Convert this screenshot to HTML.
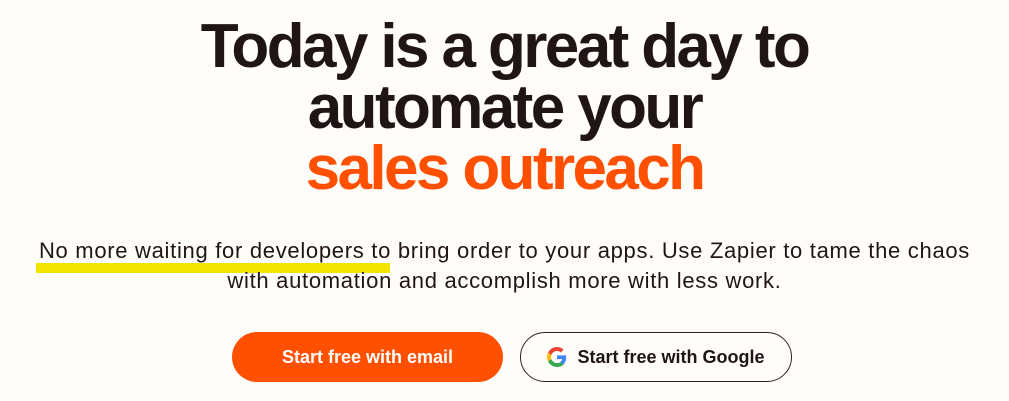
<!DOCTYPE html>
<html><head><meta charset="utf-8"><style>
*{margin:0;padding:0;box-sizing:border-box}
html,body{width:1009px;height:401px;overflow:hidden;background:#fffdf9;font-family:"Liberation Sans",sans-serif;color:#201515}
h1{position:absolute;left:0;top:16px;width:1009px;text-align:center;font-size:62px;line-height:61px;font-weight:700;letter-spacing:-2.6px}
h1 .o{color:#ff4f00}
p{position:absolute;left:0;top:236px;width:1009px;text-align:center;font-size:22px;line-height:30px;letter-spacing:0.7px;color:#201515}
.hl{position:absolute;left:36px;top:263px;width:354px;height:10px;background:#f2e600}
.b{position:absolute;top:332px;height:50px;border-radius:25px;font-size:18px;font-weight:700;display:flex;align-items:center;justify-content:center}
.b1{left:232px;width:271px;background:#ff4f00;color:#fff}
.b2{left:520px;width:272px;border:1px solid #2b2323;color:#201515}
.b2 svg{margin-right:10px}
</style></head><body>
<div class="hl"></div>
<h1>Today is a great day to<br>automate your<br><span class="o">sales outreach</span></h1>
<p>No more waiting for developers to bring order to your apps. Use Zapier to tame the chaos<br>with automation and accomplish more with less work.</p>
<div class="b b1">Start free with email</div>
<div class="b b2"><svg width="20" height="20" viewBox="0 0 48 48"><path fill="#EA4335" d="M24 9.5c3.5 0 6.6 1.2 9.1 3.6l6.8-6.8C35.8 2.4 30.3 0 24 0 14.6 0 6.6 5.4 2.6 13.2l7.9 6.2C12.4 13.6 17.700 9.5 24 9.5z"/><path fill="#4285F4" d="M46.1 24.5c0-1.6-.1-3.1-.4-4.5H24v9h12.4c-.5 2.9-2.2 5.4-4.7 7.1l7.6 5.900c4.4-4.1 6.800-10.100 6.800-17.500z"/><path fill="#FBBC05" d="M10.5 28.6c-.5-1.4-.8-3-.8-4.6s.3-3.2.8-4.6l-7.9-6.2C.9 16.5 0 20.1 0 24s.9 7.5 2.6 10.8l7.9-6.2z"/><path fill="#34A853" d="M24 48c6.5 0 11.9-2.1 15.9-5.8l-7.6-5.9c-2.1 1.4-4.9 2.3-8.3 2.3-6.3 0-11.6-4.1-13.5-9.9l-7.9 6.2C6.6 42.6 14.6 48 24 48z"/></svg>Start free with Google</div>
</body></html>
